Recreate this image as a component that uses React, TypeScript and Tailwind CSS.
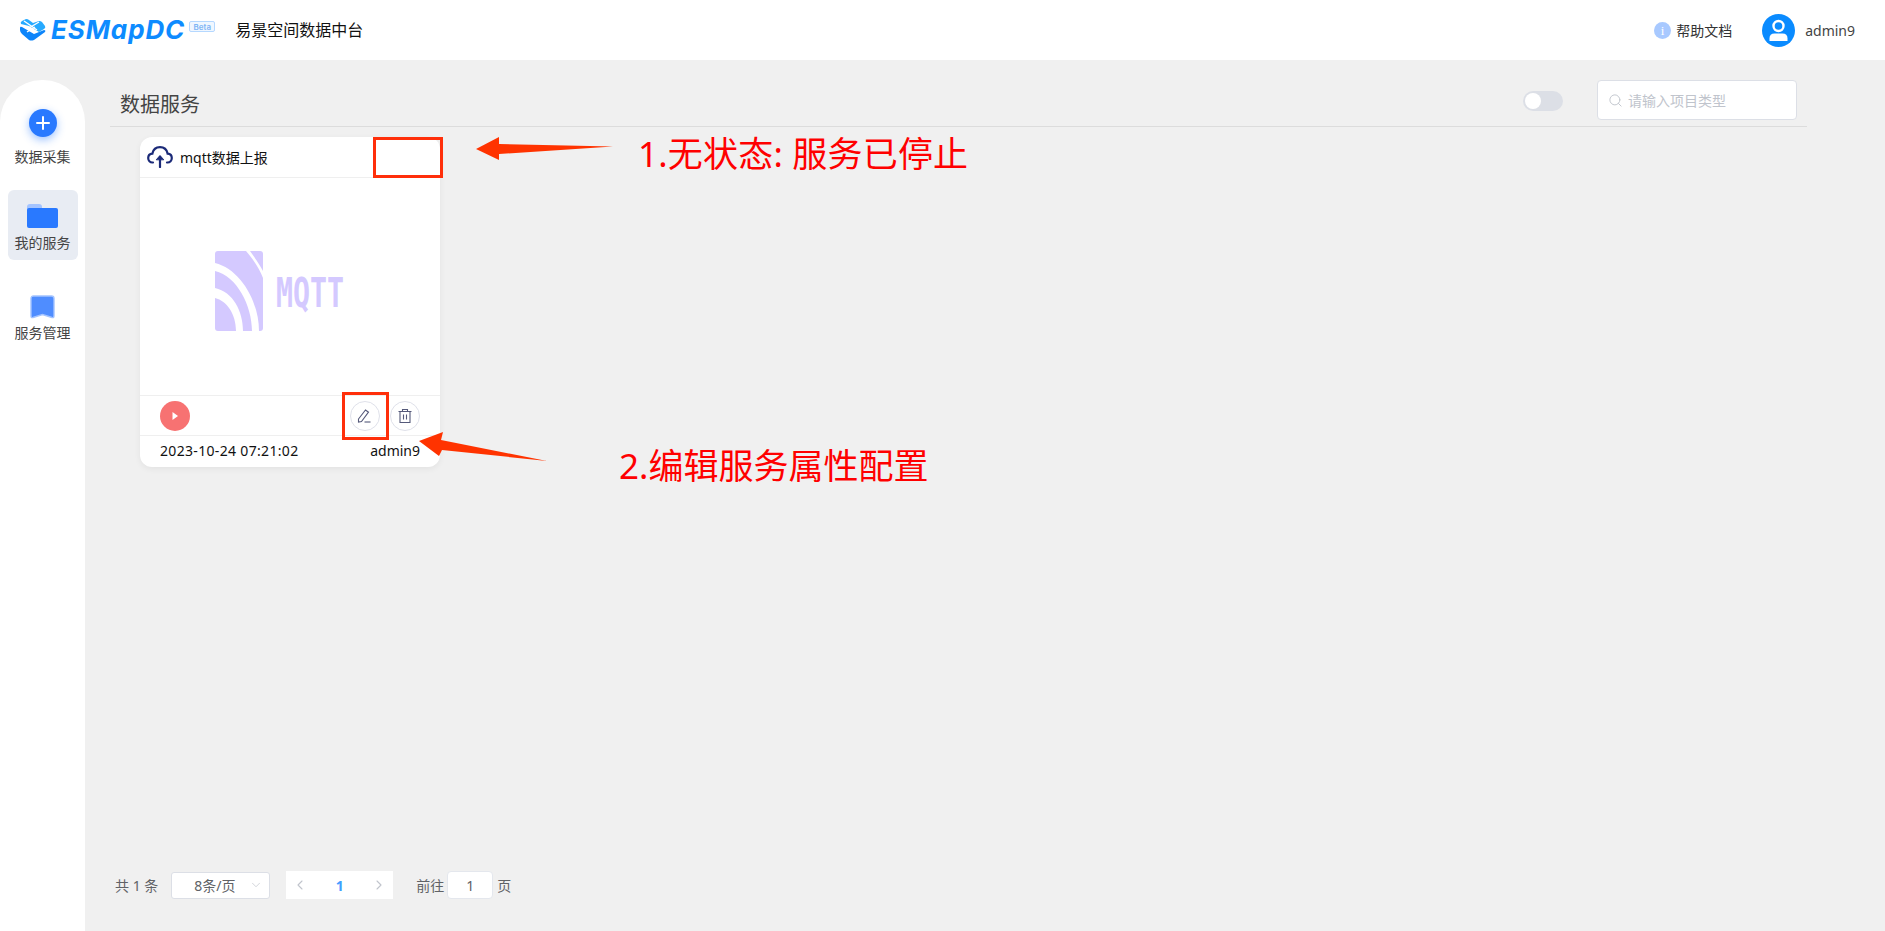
import { ChevronDown, ChevronLeft, ChevronRight, Search } from "lucide-react"

const cjk = "font-['Noto_Sans','Noto_Sans_CJK_SC',sans-serif]"

function Logo() {
  return (
    <div className="flex items-center">
      <svg width="26" height="22" viewBox="0 0 26 22" className="mr-[5px]">
        <path d="M1 5 Q0 3 2 2 L6 0 Q8 0 9 1 L13 4 L19 2 Q21 2 22 3 L25 7 Q26 9 24 10 L19 13 L9 7 Z" fill="#27aaff" />
        <path d="M0 9 Q0 7 2 8 L14 15 L24 11 Q26 11 25 13 L14 21 Q11 22 9 21 L2 15 Q0 13 0 11 Z" fill="#0d85fa" />
        <path d="M4 2 L17 11 M9 9 L19 3 M7 13 L15 8" stroke="#fff" strokeWidth="1.4" fill="none" />
      </svg>
      <span className="font-['Inter',sans-serif] text-[26px] font-bold italic leading-none tracking-[0.9px] text-[#0d8bff]">
        ESMapDC
      </span>
      <span className="-mt-[7px] ml-[4px] flex h-[11px] w-[26px] items-center justify-center rounded-[2px] border border-[#b5d8ff] bg-[#f0f7ff] font-['Inter',sans-serif] text-[8px] font-semibold leading-none text-[#7fb5f5]">
        Beta
      </span>
    </div>
  )
}

function Header() {
  return (
    <header className="flex h-[60px] shrink-0 items-center bg-white pl-[20px] pr-[30px]">
      <Logo />
      <span className="ml-[20px] text-[16px] text-[#111]">易景空间数据中台</span>
      <div className="ml-auto flex items-center">
        <span className="flex h-[17px] w-[17px] items-center justify-center rounded-full bg-[#a8c9ff] font-['Liberation_Serif',serif] text-[13px] leading-none text-white">
          i
        </span>
        <span className="ml-[5px] text-[14px] text-[#333]">帮助文档</span>
        <svg width="33" height="33" viewBox="0 0 33 33" className="ml-[30px]">
          <circle cx="16.5" cy="16.5" r="16.5" fill="#0a8bff" />
          <circle cx="16.5" cy="12" r="5" fill="none" stroke="#fff" strokeWidth="2.4" />
          <path d="M7.5 27 V24.5 Q7.5 19.5 12.5 19.5 H20.5 Q25.5 19.5 25.5 24.5 V27 Z" fill="#fff" />
        </svg>
        <span className="ml-[10px] text-[14px] text-[#444]">admin9</span>
      </div>
    </header>
  )
}

function Sidebar() {
  return (
    <aside className="mt-[20px] flex w-[85px] shrink-0 flex-col items-center rounded-t-[42px] bg-white pt-[29px] text-[14px] leading-[20px] text-[#444]">
      <span className="flex h-[28px] w-[28px] items-center justify-center rounded-full bg-[#2979ff] shadow-[0_3px_8px_rgba(41,121,255,0.45)]">
        <svg width="16" height="16" viewBox="0 0 16 16">
          <path d="M8 2 V14 M2 8 H14" stroke="#fff" strokeWidth="2" strokeLinecap="round" />
        </svg>
      </span>
      <span className="mt-[10px]">数据采集</span>
      <div className="mt-[23px] flex h-[70px] w-[70px] flex-col items-center rounded-[6px] bg-[#e8ecf3] pt-[14px]">
        <svg width="31" height="24" viewBox="0 0 31 24">
          <path d="M0 3 Q0 0 3 0 H12 Q15 0 15 3 V8 H0 Z" fill="#a4c4ff" />
          <rect x="0" y="4" width="31" height="20" rx="2" fill="#2979ff" />
        </svg>
        <span className="mt-[5px]">我的服务</span>
      </div>
      <svg width="25" height="24" viewBox="0 0 25 24" className="mt-[35px]">
        <path d="M1 3.5 Q1 1 3.5 1 H21.5 Q24 1 24 3.5 V21 Q24 23 22 22.5 L12.5 19.5 L3 22.5 Q1 23 1 21 Z" fill="#4f8dff" stroke="#a4c4ff" strokeWidth="1.4" />
      </svg>
      <span className="mt-[4px]">服务管理</span>
    </aside>
  )
}

function MqttLogo() {
  return (
    <svg width="130" height="80" viewBox="0 0 130 80">
      <rect width="48" height="80" rx="3" fill="#d4c9ff" />
      <path d="M0 37 C18 41 28 60 28 80 L21 80 C21 63 12 50 0 47 Z" fill="#fff" />
      <path d="M0 12 C25 18 44 50 44 80 L37 80 C37 55 22 25 0 20 Z" fill="#fff" />
      <path d="M31 0 L35 0 C40 7 45 14 48 20 L48 27 C44 17 38 8 31 0 Z" fill="#fff" />
      <text
        x="0"
        y="0"
        transform="translate(61 56) scale(0.69 1)"
        fontFamily="DejaVu Sans Mono"
        fontWeight="700"
        fontSize="41"
        fill="#d4c9ff"
      >
        MQTT
      </text>
    </svg>
  )
}

function ServiceCard() {
  return (
    <div className="h-[330px] w-[300px] rounded-[12px] bg-white text-[14px] text-[#111] shadow-[0_2px_6px_rgba(0,0,0,0.06)]">
      <div className="flex h-[41px] items-center border-b border-[#efefef] pl-[7px]">
        <svg width="26" height="22" viewBox="0 0 26 22" fill="none" stroke="#1b2a78" strokeWidth="2.2" strokeLinecap="round">
          <path d="M6 16.5 H5.5 C3 16.5 1.2 14.5 1.2 12 C1.2 9.6 3 7.8 5.4 7.6 C6.2 3.8 9.2 1.2 13 1.2 C16.8 1.2 19.8 3.8 20.6 7.6 C23 7.8 24.8 9.6 24.8 12 C24.8 14.5 23 16.5 20.5 16.5 H20" />
          <path d="M13 21 V11" />
          <path d="M9.5 13.5 L13 9.5 L16.5 13.5 Z" fill="#1b2a78" strokeWidth="1" />
        </svg>
        <span className="ml-[7px]">mqtt数据上报</span>
      </div>
      <div className="flex h-[217px] items-start justify-start pl-[75px] pt-[73px]">
        <MqttLogo />
      </div>
      <div className="flex h-[41px] items-center border-y border-[#efefef] pl-[20px] pr-[20px]">
        <span className="flex h-[30px] w-[30px] items-center justify-center rounded-full bg-[#f77272]">
          <svg width="10" height="10" viewBox="0 0 10 10">
            <path d="M2.5 1 L8 5 L2.5 9 Z" fill="#fff" />
          </svg>
        </span>
        <span className="ml-auto flex h-[30px] w-[30px] items-center justify-center rounded-full border border-[#dfe1ea]">
          <svg width="16" height="16" viewBox="0 0 16 16" fill="none" stroke="#55597a" strokeWidth="1.1">
            <path d="M1.5 11 L8.5 2 L11.5 4.2 L4.5 13.5 L1.5 14 Z" />
            <path d="M7.5 14 H13.5" />
          </svg>
        </span>
        <span className="ml-[10px] flex h-[30px] w-[30px] items-center justify-center rounded-full border border-[#dfe1ea]">
          <svg width="16" height="16" viewBox="0 0 16 16" fill="none" stroke="#55597a" strokeWidth="1.1">
            <path d="M1.5 3.5 H14.5 M5.5 3.5 V1.5 H10.5 V3.5" />
            <path d="M3 3.5 V14.5 H13 V3.5" />
            <path d="M6.5 6.5 V11.5 M9.5 6.5 V11.5" />
          </svg>
        </span>
      </div>
      <div className="flex h-[30px] items-center justify-between pl-[20px] pr-[20px] pb-[1px]">
        <span className="tracking-[0.33px]">2023-10-24 07:21:02</span>
        <span>admin9</span>
      </div>
    </div>
  )
}

function Pagination() {
  return (
    <div className="mt-auto flex items-center pb-[32px] pl-[30px] text-[14px] text-[#606266]">
      <span>共 1 条</span>
      <div className="ml-[13px] flex h-[27px] w-[99px] items-center rounded-[3px] border border-[#dcdfe6] bg-white pl-[22px] pr-[6px]">
        <span>8条/页</span>
        <ChevronDown size={14} strokeWidth={1.2} className="ml-auto text-[#c0c4cc]" />
      </div>
      <div className="ml-[16px] flex h-[28px] w-[107px] items-center justify-between bg-white px-[6px] text-[#c0c4cc]">
        <ChevronLeft size={16} strokeWidth={1.6} />
        <span className="font-bold text-[#409eff]">1</span>
        <ChevronRight size={16} strokeWidth={1.6} />
      </div>
      <span className="ml-[23px]">前往</span>
      <div className="ml-[3px] flex h-[28px] w-[46px] items-center justify-center rounded-[4px] border border-[#e4e7ed] bg-white">1</div>
      <span className="ml-[4px]">页</span>
    </div>
  )
}

function Annotations() {
  return (
    <>
      <div className="absolute left-[373px] top-[137px] h-[41px] w-[70px] border-[3px] border-[#ff2f0a]" />
      <div className="absolute left-[342px] top-[392px] h-[48px] w-[47px] border-[3px] border-[#ff2f0a]" />
      <svg width="145" height="30" viewBox="0 0 145 30" className="absolute left-[474px] top-[134px]">
        <path d="M2 15 L25 3 L25 10 L139 12.5 L25 20 L25 26 Z" fill="#ff3300" />
      </svg>
      <svg width="135" height="36" viewBox="0 0 135 36" className="absolute left-[416px] top-[430px]">
        <path d="M3 11 L27 2 L25 10 L131 31 L26 20 L23 26 Z" fill="#ff3300" />
      </svg>
      <span className="absolute left-[638px] top-[130px] whitespace-nowrap text-[35px] leading-[48px] tracking-[0.2px] text-[#ff0000]">
        1.无状态: 服务已停止
      </span>
      <span className="absolute left-[619px] top-[442px] whitespace-nowrap text-[35px] leading-[48px] text-[#ff0000]">
        2.编辑服务属性配置
      </span>
    </>
  )
}

export default function App() {
  return (
    <div className={`relative flex h-[931px] flex-col overflow-hidden bg-[#f0f0f0] ${cjk}`}>
      <Header />
      <div className="flex min-h-0 flex-1">
        <Sidebar />
        <main className="flex min-w-0 flex-1 flex-col">
          <div className="ml-[25px] mt-[20px] flex h-[47px] w-[1697px] shrink-0 items-start border-b border-[#dcdcdc] pl-[10px] pr-[10px]">
            <span className="mt-[10px] text-[20px] leading-[30px] text-[#444]">数据服务</span>
            <span className="ml-auto mr-[34px] mt-[11px] flex h-[20px] w-[40px] items-center rounded-full bg-[#dcdfe6] pl-[2px]">
              <span className="h-[16px] w-[16px] rounded-full bg-white" />
            </span>
            <div className="flex h-[40px] w-[200px] items-center rounded-[4px] border border-[#dcdfe6] bg-white pl-[10px] text-[14px] text-[#c0c4cc]">
              <Search size={15} strokeWidth={1.5} />
              <span className="ml-[5px]">请输入项目类型</span>
            </div>
          </div>
          <div className="pl-[55px] pt-[10px]">
            <ServiceCard />
          </div>
          <Pagination />
        </main>
      </div>
      <Annotations />
    </div>
  )
}
